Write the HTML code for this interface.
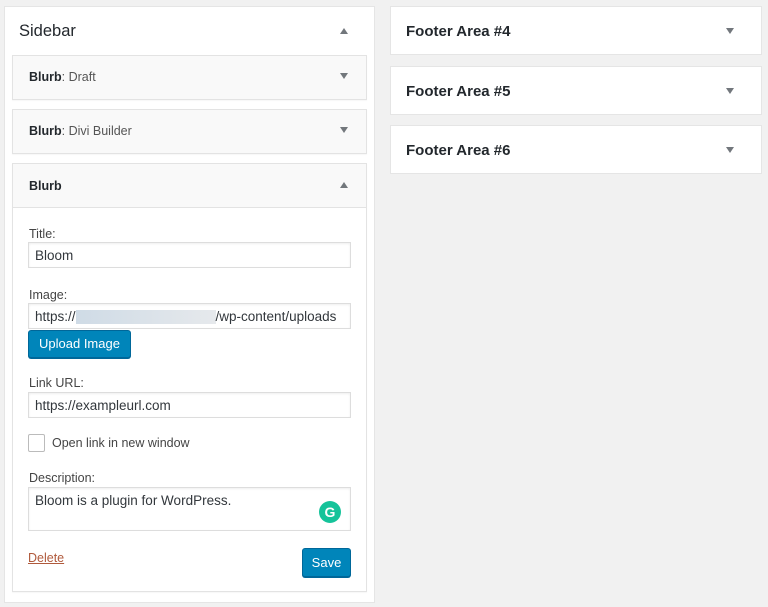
<!DOCTYPE html>
<html><head><style>
body{margin:0;width:768px;height:607px;background:#f1f1f1;font-family:"Liberation Sans",sans-serif;position:relative;overflow:hidden;color:#23282d}
.a{position:absolute;box-sizing:border-box}
.box{background:#fff;border:1px solid #e5e5e5}
.w{background:#f9f9f9;border:1px solid #e3e3e3;box-shadow:0 1px 1px rgba(0,0,0,.04)}
.t{position:absolute;font-weight:bold;font-size:13px}
.tri{position:absolute;width:0;height:0;border-left:4px solid transparent;border-right:4px solid transparent}
.dn{border-top:6px solid #72777c}.up{border-bottom:6px solid #72777c}
.lab{position:absolute;left:29px;font-size:12.5px;color:#444}
.in{position:absolute;left:28px;width:323px;height:26px;border:1px solid #ddd;background:#fff;box-shadow:inset 0 1px 2px rgba(0,0,0,.07);font-size:13.5px;color:#32373c;padding:5px 6px;box-sizing:border-box;white-space:nowrap;overflow:hidden}
.btn{position:absolute;background:#0085ba;border:1px solid #006799;border-radius:3px;color:#fff;font-size:13px;box-sizing:border-box;text-align:center;box-shadow:0 1px 0 #006799}
</style></head><body>
<div class="a box" style="left:4px;top:6px;width:371px;height:597px"></div>
<div class="t" style="left:19px;top:22px;font-size:16.5px;font-weight:normal;color:#23282d">Sidebar</div>
<div class="tri up" style="left:340px;top:28px"></div>

<div class="a w" style="left:12px;top:55px;width:355px;height:45px"></div>
<div class="t" style="left:29px;top:70px;font-size:12.5px">Blurb<span style="font-weight:normal;color:#555">: Draft</span></div>
<div class="tri dn" style="left:340px;top:73px"></div>

<div class="a w" style="left:12px;top:109px;width:355px;height:45px"></div>
<div class="t" style="left:29px;top:124px;font-size:12.5px">Blurb<span style="font-weight:normal;color:#555">: Divi Builder</span></div>
<div class="tri dn" style="left:340px;top:127px"></div>

<div class="a w" style="left:12px;top:163px;width:355px;height:429px"></div>
<div class="t" style="left:29px;top:179px;font-size:12.5px">Blurb</div>
<div class="tri up" style="left:340px;top:182px"></div>
<div class="a" style="left:13px;top:207px;width:353px;height:384px;background:#fff;border-top:1px solid #e3e3e3"></div>

<div class="lab" style="top:227px">Title:</div>
<div class="in" style="top:242px">Bloom</div>
<div class="lab" style="top:288px">Image:</div>
<div class="in" style="top:303px">https://<span style="display:inline-block;width:140px;height:14px;background:linear-gradient(90deg,#cfdbe6,#e6e9ec);vertical-align:middle"></span>/wp-content/uploads</div>
<div class="btn" style="left:28px;top:330px;width:103px;height:28px;line-height:26px">Upload Image</div>
<div class="lab" style="top:376px">Link URL:</div>
<div class="in" style="top:392px">https://exampleurl.com</div>
<div class="a" style="left:28px;top:434px;width:17px;height:18px;border:1px solid #bbb;background:#fff;border-radius:2px"></div>
<div class="lab" style="left:52px;top:436px">Open link in new window</div>
<div class="lab" style="top:471px">Description:</div>
<div class="in" style="top:487px;height:44px">Bloom is a plugin for WordPress.</div>
<div class="a" style="left:319px;top:501px;width:22px;height:22px;border-radius:50%;background:#15c39a;color:#fff;font-size:14px;font-weight:bold;text-align:center;line-height:22px">G</div>
<div class="a" style="left:28px;top:551px;font-size:12.5px;color:#a00;text-decoration:underline;color:#b05a3c">Delete</div>
<div class="btn" style="left:302px;top:548px;width:49px;height:29px;line-height:27px">Save</div>

<div class="a box" style="left:390px;top:6px;width:372px;height:49px"></div>
<div class="t" style="left:406px;top:23px;font-size:15px">Footer Area #4</div>
<div class="tri dn" style="left:726px;top:28px"></div>
<div class="a box" style="left:390px;top:66px;width:372px;height:49px"></div>
<div class="t" style="left:406px;top:83px;font-size:15px">Footer Area #5</div>
<div class="tri dn" style="left:726px;top:88px"></div>
<div class="a box" style="left:390px;top:125px;width:372px;height:49px"></div>
<div class="t" style="left:406px;top:142px;font-size:15px">Footer Area #6</div>
<div class="tri dn" style="left:726px;top:147px"></div>
</body></html>
